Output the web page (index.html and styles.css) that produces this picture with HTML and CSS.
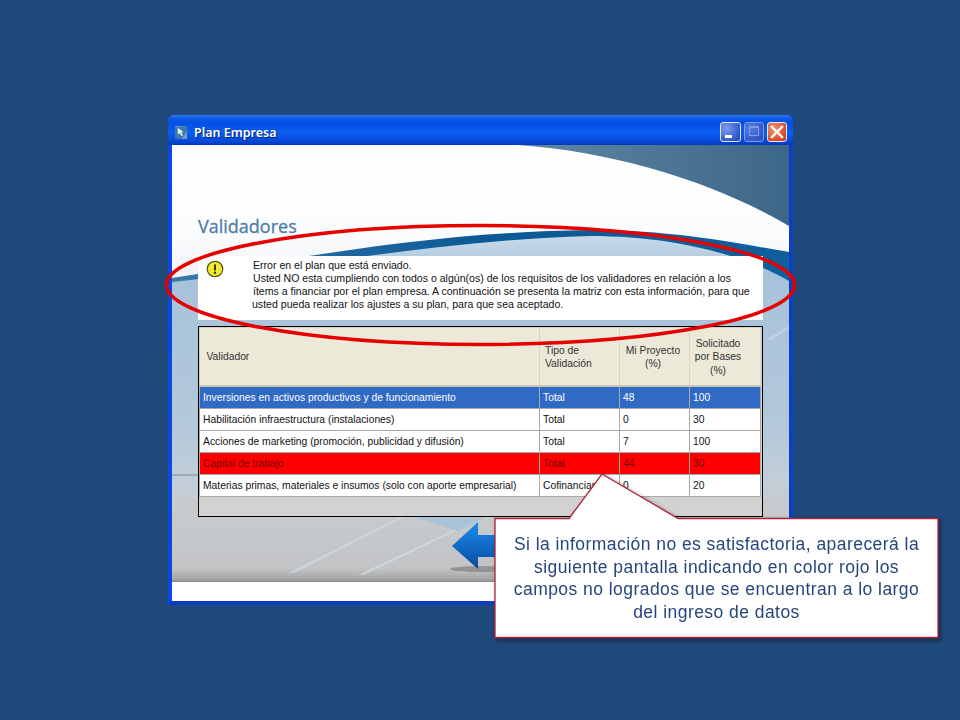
FILE: index.html
```html
<!DOCTYPE html>
<html lang="es">
<head>
<meta charset="utf-8">
<title>Plan Empresa</title>
<link rel="stylesheet" href="styles.css">
</head>
<body>
<div class="stage">
  <div class="window">
    <div class="titlebar">
      <svg class="app-icon" viewBox="0 0 16 16" width="15" height="15">
        <rect x="1" y="1" width="13" height="14" rx="1.5" fill="#6f9ec9"/>
        <path d="M1 2 L14 1 L14 6 L8 15 L1 15 Z" fill="#3c77ad"/>
        <path d="M4 3 L4 10 L6 8.5 L8 12 L9.5 11 L7.6 7.8 L10 7.4 Z" fill="#e8f0f8"/>
      </svg>
      <span class="title">Plan Empresa</span>
      <div class="controls">
        <span class="btn btn-min"><i></i></span>
        <span class="btn btn-max"><i></i></span>
        <span class="btn btn-close">
          <svg viewBox="0 0 20 20" width="20" height="20"><path d="M5 5 L15 15 M15 5 L5 15" stroke="#fff" stroke-width="2.4" stroke-linecap="square"/></svg>
        </span>
      </div>
    </div>
    <div class="client">
      <div class="main">
        <svg class="backdrop" viewBox="172 145 617 437" preserveAspectRatio="none">
          <defs>
            <linearGradient id="sky" x1="0" y1="0" x2="0" y2="1">
              <stop offset="0" stop-color="#ffffff"/>
              <stop offset="0.2" stop-color="#fbfcfd"/>
              <stop offset="0.32" stop-color="#eef2f6"/>
              <stop offset="1" stop-color="#e6ecf2"/>
            </linearGradient>
            <linearGradient id="lower" gradientUnits="userSpaceOnUse" x1="0" y1="240" x2="0" y2="582">
              <stop offset="0" stop-color="#c4d8e8"/>
              <stop offset="0.1" stop-color="#a6c2da"/>
              <stop offset="0.55" stop-color="#b4c8da"/>
              <stop offset="0.7" stop-color="#c2ced8"/>
              <stop offset="0.78" stop-color="#c8cbce"/>
              <stop offset="0.96" stop-color="#c2c4c6"/>
              <stop offset="0.99" stop-color="#a8a8a8"/>
              <stop offset="1" stop-color="#8c8c8c"/>
            </linearGradient>
            <linearGradient id="dark" x1="0" y1="0" x2="1" y2="0">
              <stop offset="0" stop-color="#5f87a5"/>
              <stop offset="1" stop-color="#3d6788"/>
            </linearGradient>
            <linearGradient id="band" x1="0" y1="0" x2="1" y2="0">
              <stop offset="0" stop-color="#3a78a8"/>
              <stop offset="0.5" stop-color="#0b5a96"/>
              <stop offset="1" stop-color="#0f5f9c"/>
            </linearGradient>
            <linearGradient id="arrow" x1="0" y1="0" x2="0" y2="1">
              <stop offset="0" stop-color="#1a8df0"/>
              <stop offset="1" stop-color="#0a4a9c"/>
            </linearGradient>
          </defs>
          <rect x="172" y="145" width="617" height="437" fill="url(#sky)"/>
          <path d="M518 145 C620 152 720 185 789 226 L789 145 Z" fill="url(#dark)"/>
          <path d="M172 278 C300 258 430 232 590 230 C680 230 745 245 789 252 L789 582 L172 582 Z" fill="url(#band)"/>
          <path d="M172 282 C300 268 440 240 590 236 C680 236 750 258 789 281 L789 582 L172 582 Z" fill="url(#lower)"/>
          <path d="M172 474 L300 474 L300 476 L172 476 Z" fill="#8c9db2" opacity="0.7"/>
          <path d="M288 573 L401 517 L404 517 L294 573 Z" fill="#dde8f2" opacity="0.45"/>
          <path d="M358 575 L475 520 L478 520 L364 575 Z" fill="#e2edf6" opacity="0.45"/>
          <path d="M415 517 L485 517 L458 531 Z" fill="#a6c2d8" opacity="0.9"/>
          <path d="M765 340 L789 326 L789 329 L772 340 Z" fill="#dfe9f2" opacity="0.35"/>
          <ellipse cx="480" cy="569" rx="30" ry="3" fill="#666" opacity="0.5"/>
          <path d="M452 546 L478 522 L478 535 L510 535 L510 557 L478 557 L478 569 Z" fill="url(#arrow)"/>
        </svg>
        <h1 class="heading">Validadores</h1>
        <div class="message">
          <svg class="warn" viewBox="0 0 20 20" width="18" height="18">
            <circle cx="10" cy="10" r="8.6" fill="#f3ea2a" stroke="#55551a" stroke-width="1.4"/>
            <rect x="8.9" y="4.6" width="2.2" height="7.2" rx="1" fill="#33331a"/>
            <circle cx="10" cy="14.2" r="1.3" fill="#33331a"/>
          </svg>
          <p class="message-text">Error en el plan que está enviado.<br>
          Usted NO esta cumpliendo con todos o algún(os) de los requisitos de los validadores en relación a los<br>
          ítems a financiar por el plan empresa. A continuación se presenta la matriz con esta información, para que<br>
          <span class="outdent">usted pueda realizar los ajustes a su plan, para que sea aceptado.</span></p>
        </div>
        <div class="grid">
          <table>
            <colgroup>
              <col class="c1"><col class="c2"><col class="c3"><col class="c4">
            </colgroup>
            <thead>
              <tr>
                <th class="left">Validador</th>
                <th class="start">Tipo de<br>Validación</th>
                <th class="mid">Mi Proyecto<br>(%)</th>
                <th class="last">Solicitado<br>por Bases<br>(%)</th>
              </tr>
            </thead>
            <tbody>
              <tr class="selected"><td>Inversiones en activos productivos y de funcionamiento</td><td>Total</td><td>48</td><td>100</td></tr>
              <tr><td>Habilitación infraestructura (instalaciones)</td><td>Total</td><td>0</td><td>30</td></tr>
              <tr><td>Acciones de marketing (promoción, publicidad y difusión)</td><td>Total</td><td>7</td><td>100</td></tr>
              <tr class="failed"><td>Capital de trabajo</td><td>Total</td><td>44</td><td>30</td></tr>
              <tr><td>Materias primas, materiales e insumos (solo con aporte empresarial)</td><td>Cofinanciar</td><td>0</td><td>20</td></tr>
            </tbody>
          </table>
        </div>
      </div>
      <div class="status"></div>
    </div>
  </div>

  <svg class="ring" viewBox="0 0 960 720" width="960" height="720">
    <ellipse cx="480.500" cy="285" rx="314" ry="59.500" fill="none" stroke="#e60000" stroke-width="3.500"/>
  </svg>

  <div class="callout">
    <svg class="callout-shape" viewBox="0 0 446 167" width="446" height="167">
      <path d="M1 45.500 L75 45.500 L108 1 L184 45.500 L444 45.500 L444 164.500 L1 164.500 Z" fill="#fff" stroke="#b5203a" stroke-width="1.300"/>
    </svg>
    <p class="callout-text">Si la información no es satisfactoria, aparecerá la<br>siguiente pantalla indicando en color rojo los<br>campos no logrados que se encuentran a lo largo<br>del ingreso de datos</p>
  </div>
</div>
</body>
</html>
```
FILE: styles.css
```css
html, body {
  margin: 0;
  padding: 0;
  background: #1f487b;
}
.stage {
  position: relative;
  width: 960px;
  height: 720px;
  padding: 115px 0 0 168px;
  box-sizing: border-box;
  overflow: hidden;
  font-family: "Liberation Sans", Arial, sans-serif;
}
.window {
  width: 625px;
  height: 490px;
  box-sizing: border-box;
  display: flex;
  flex-direction: column;
  background: #0a45d8;
  border-radius: 6px 6px 0 0;
  border-left: 4px solid #0b48e0;
  border-right: 4px solid #0a3fc8;
  border-bottom: 4px solid #0a3cc0;
}
.titlebar {
  height: 30px;
  margin: 0 -4px;
  padding: 4px 6px 0 6px;
  box-sizing: border-box;
  display: flex;
  align-items: center;
  flex: none;
  border-radius: 6px 6px 0 0;
  background: linear-gradient(#2f7df0 0, #0f5ae8 3px, #0550e4 8px, #0a5cf0 18px, #0646d4 27px, #0438b8 30px);
}
.app-icon {
  margin-right: 5px;
  flex: none;
}
.title {
  font-family: "Noto Sans", sans-serif;
  font-size: 12.500px;
  font-weight: 600;
  color: #fff;
  text-shadow: 1px 1px 1px #06237a;
}
.controls {
  margin-left: auto;
  display: flex;
  gap: 3px;
}
.btn {
  width: 20px;
  height: 20px;
  box-sizing: border-box;
  border: 1px solid #dfe8fa;
  border-radius: 3px;
  position: relative;
  display: block;
}
.btn-min {
  width: 21px;
  background: radial-gradient(circle at 30% 30%, #7f9cf0, #2a50c8 80%);
}
.btn-min i {
  position: absolute;
  left: 4px;
  bottom: 3px;
  width: 7px;
  height: 3px;
  background: #fff;
}
.btn-max {
  background: radial-gradient(circle at 30% 30%, #5a7de4, #2c52c4 80%);
  border-color: #7f9ce8;
}
.btn-max i {
  position: absolute;
  left: 4px;
  top: 3px;
  width: 10px;
  height: 10px;
  box-sizing: border-box;
  border: 1px solid #7f9ce8;
  border-top-width: 2px;
}
.btn-close {
  background: radial-gradient(circle at 30% 30%, #ee9470, #d4421c 80%);
}
.btn-close svg {
  position: absolute;
  left: -1px;
  top: -1px;
}
.client {
  flex: 1;
  display: flex;
  flex-direction: column;
  background: #fff;
}
.main {
  height: 437px;
  flex: none;
  position: relative;
  padding: 71px 0 0 26px;
  box-sizing: border-box;
  border-bottom: 1px solid #7d7d7d;
}
.backdrop {
  position: absolute;
  left: 0;
  top: 0;
  width: 617px;
  height: 437px;
}
.heading {
  position: relative;
  margin: 0 0 19px;
  height: 21px;
  font-family: "Open Sans", sans-serif;
  font-size: 18px;
  line-height: 21px;
  font-weight: 400;
  color: #4d7ea8;
  -webkit-text-stroke: 0.3px #4d7ea8;
}
.message {
  position: relative;
  width: 565px;
  height: 64px;
  background: #fff;
  display: flex;
  margin-bottom: 6px;
}
.warn {
  margin: 4px 0 0 8px;
  flex: none;
}
.message-text {
  margin: 3px 0 0 29px;
  font-size: 10.570px;
  line-height: 13px;
  color: #111;
  white-space: nowrap;
}
.outdent {
  margin-left: -1px;
}
.grid {
  position: relative;
  width: 565px;
  height: 191px;
  box-sizing: border-box;
  border: 1px solid #000;
  padding: 1px 2px 0 0;
  background: #d2d2d2;
}
table {
  width: 561px;
  table-layout: fixed;
  border-collapse: collapse;
  font-size: 10.320px;
  color: #111;
}
.c1 { width: 340px; }
.c2 { width: 80px; }
.c3 { width: 70px; }
.c4 { width: 71px; }
th {
  height: 58px;
  padding: 1px 2px 0 2px;
  box-sizing: border-box;
  background: #ece9d8;
  font-weight: 400;
  line-height: 13.500px;
  text-align: center;
  color: #333;
  border-right: 1px solid #d8d5c4;
  border-bottom: 2px solid #c9c6b5;
}
th.left {
  text-align: left;
  padding-left: 7px;
}
th.start {
  text-align: left;
  padding-left: 5px;
}
th.mid {
  padding-right: 5px;
}
th.last {
  padding-right: 16px;
}
td {
  height: 22px;
  padding: 0 0 0 3px;
  box-sizing: border-box;
  background: #fff;
  border: 1px solid #a9a9a4;
  white-space: nowrap;
  overflow: hidden;
}
.selected td {
  background: #316ac5;
  color: #fff;
}
.failed td {
  background: #fe0000;
  color: #780000;
}
.ring {
  position: absolute;
  left: 0;
  top: 0;
}
.callout {
  position: absolute;
  left: 494px;
  top: 473px;
  width: 446px;
  height: 167px;
  filter: drop-shadow(2px 2px 2px rgba(0, 0, 0, 0.45));
}
.callout-shape {
  position: absolute;
  left: 0;
  top: 0;
}
.callout-text {
  position: absolute;
  left: 1px;
  top: 46px;
  width: 443px;
  height: 118px;
  box-sizing: border-box;
  padding: 14px 0 0;
  margin: 0;
  text-align: center;
  font-size: 17.500px;
  letter-spacing: 0.450px;
  line-height: 22.500px;
  white-space: nowrap;
  color: #27457c;
}
```
